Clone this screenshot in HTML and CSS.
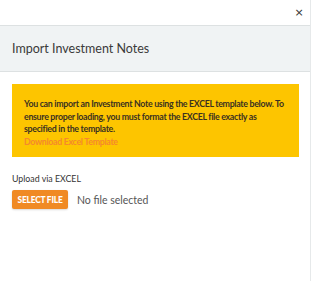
FILE: index.html
```html
<!DOCTYPE html>
<html lang="en">
<head>
  <meta charset="UTF-8">
  <title>Import Investment Notes</title>
  <link rel="stylesheet" href="styles.css">
</head>
<body>
  <div class="modal">
    <div class="modal-top">
      <button type="button" class="close-btn">&times;</button>
    </div>
    <div class="modal-header">
      <h2>Import Investment Notes</h2>
    </div>
    <div class="modal-body">
      <div class="notice">
        You can import an Investment Note using the EXCEL template below. To ensure proper loading, you must format the EXCEL file exactly as specified in the template.
        <a href="#" class="notice-link">Download Excel Template</a>
      </div>
      <div class="upload-label">Upload via EXCEL</div>
      <div class="upload-row">
        <button type="button" class="select-btn">SELECT FILE</button>
        <span class="file-name">No file selected</span>
      </div>
    </div>
  </div>
</body>
</html>
```
FILE: styles.css
```css
body {
  margin: 0;
  background: #fff;
  font-family: Lato, "Open Sans", sans-serif;
  color: #333;
}

.modal {
  width: 311px;
  height: 281px;
  border-right: 1px solid #e6e9ea;
  box-sizing: border-box;
}

.modal-top {
  height: 25px;
  border-bottom: 1px solid #dde1e2;
  display: flex;
  justify-content: flex-end;
  align-items: center;
  padding-right: 5px;
}

.close-btn {
  background: none;
  border: none;
  font-family: "DejaVu Sans", sans-serif;
  font-size: 11px;
  color: #333;
  padding: 0;
  width: 12px;
  cursor: pointer;
}

.modal-header {
  height: 45px;
  background: #f0f3f4;
  border-bottom: 1px solid #dde1e2;
  display: flex;
  align-items: center;
  padding-left: 12px;
}

.modal-header h2 {
  margin: 0;
  font-size: 12.5px;
  font-weight: 400;
  color: #3a3a3a;
}

.modal-body {
  padding: 12px 11px 0 12px;
}

.notice {
  background: #fdc500;
  padding: 14px 12px 9px 12px;
  font-size: 8.8px;
  font-weight: 700;
  letter-spacing: -0.3px;
  line-height: 12.6px;
  color: #3b3120;
}

.notice-link {
  display: block;
  color: #f5892c;
  text-decoration: none;
}

.upload-label {
  margin-top: 16px;
  font-size: 8.8px;
  color: #333;
}

.upload-row {
  display: flex;
  align-items: center;
  gap: 9px;
  margin-top: 6px;
}

.select-btn {
  width: 56px;
  height: 19px;
  background: #f08a24;
  border: none;
  border-radius: 2px;
  color: #fff;
  font-family: Lato, sans-serif;
  font-size: 8.4px;
  font-weight: 900;
  letter-spacing: -0.2px;
  padding: 0;
  box-shadow: 0 1px 2px rgba(0, 0, 0, 0.15);
  cursor: pointer;
}

.file-name {
  font-size: 10.5px;
  color: #555;
}
```
